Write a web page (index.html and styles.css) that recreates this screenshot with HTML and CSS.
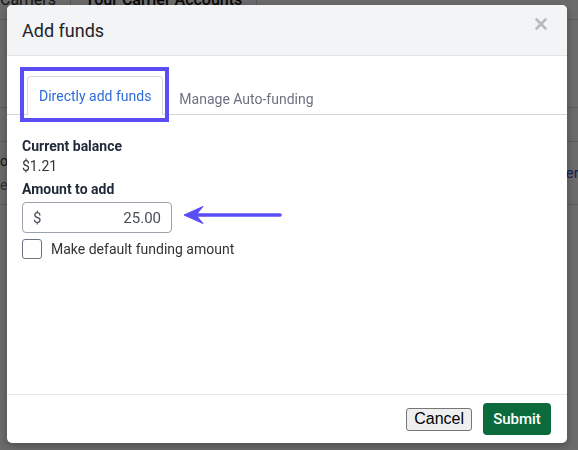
FILE: index.html
```html
<!DOCTYPE html>
<html lang="en">
<head>
    <meta charset="UTF-8">
    <meta name="viewport" content="width=device-width, initial-scale=1.0">
    <title>Add funds</title>
    <link rel="stylesheet" href="styles.css">
</head>
<body>
    <!-- Page behind the dialog -->
    <div class="page">
        <nav class="page-tabs">
            <span class="page-tab">Carriers</span>
            <span class="page-tab">Your Carrier Accounts</span>
        </nav>
        <div class="page-table">
            <div class="page-row"></div>
            <div class="page-row page-row-small"></div>
            <div class="page-row page-row-tall">
                <div class="page-cell">
                    <div>os</div>
                    <div class="page-sub">ev</div>
                </div>
                <a class="page-link">Serve</a>
            </div>
        </div>
    </div>
    <div class="backdrop"></div>

    <!-- Modal -->
    <div class="modal">
        <div class="modal-header">
            <h2 class="modal-title">Add funds</h2>
            <span class="close">
                <svg width="12" height="12" viewBox="0 0 12 12">
                    <path d="M1.5 1.5 L10.5 10.5 M10.5 1.5 L1.5 10.5" stroke="#b6bbc3" stroke-width="2.6" stroke-linecap="round"/>
                </svg>
            </span>
        </div>

        <div class="modal-body">
            <div class="tabs">
                <span class="tab tab-active">Directly add funds</span>
                <span class="tab tab-inactive">Manage Auto-funding</span>
            </div>

            <div class="content">
                <div class="field-label">Current balance</div>
                <div class="balance">$1.21</div>
                <label class="field-label amount-label" for="amount">Amount to add</label>
                <div class="money-input">
                    <span class="currency">$</span>
                    <input type="text" id="amount" class="amount" value="25.00">
                </div>
                <label class="check-row">
                    <span class="checkbox"></span>
                    Make default funding amount
                </label>
            </div>

            <!-- annotations -->
            <div class="highlight"></div>
            <svg class="pointer" width="106" height="22" viewBox="0 0 106 22">
                <path d="M15 11 L100 11" stroke="#5a4df6" stroke-width="3.6" stroke-linecap="round"/>
                <path d="M4 11 L23 2.5 L16 11 L23 19.5 Z" fill="#5a4df6" stroke="#5a4df6" stroke-width="1" stroke-linejoin="round"/>
            </svg>
        </div>

        <div class="modal-footer">
            <button class="btn-cancel">Cancel</button>
            <button class="btn-submit">Submit</button>
        </div>
    </div>
</body>
</html>
```

FILE: styles.css
```css
body {
    margin: 0;
    font-family: Roboto, "Noto Sans", Arial, sans-serif;
    background: #fff;
    height: 450px;
    overflow: hidden;
}

/* page behind the dialog */
.page {
    width: 600px;
}

.page-tabs {
    display: flex;
    margin-top: -9px;
    height: 28px;
    border-bottom: 1px solid #ddd;
    font-size: 16px;
    color: #333;
}

.page-tab {
    padding: 0 14px 0 0;
    border-right: 1px solid #ccc;
    line-height: 18px;
}

.page-tab + .page-tab {
    padding-left: 14px;
    font-weight: 500;
    color: #111;
}

.page-table {
    margin-top: 37px;
}

.page-row {
    height: 50px;
    border-bottom: 1px solid #d8d8d8;
}

.page-row-small {
    height: 33px;
}

.page-row-tall {
    height: 62px;
    display: flex;
    justify-content: space-between;
    align-items: center;
    font-size: 14px;
    color: #333;
}

.page-sub {
    color: #777;
    margin-top: 8px;
}

.page-link {
    color: #2a56c6;
    font-size: 15px;
    margin-right: 6px;
}

.backdrop {
    position: fixed;
    inset: 0;
    background: rgba(0, 0, 0, 0.58);
}

/* dialog */
.modal {
    position: fixed;
    left: 7px;
    top: 5px;
    width: 560px;
    height: 438px;
    background: #fff;
    border-radius: 5px;
    overflow: hidden;
    display: flex;
    flex-direction: column;
    box-shadow: 0 3px 10px rgba(0, 0, 0, 0.3);
}

.modal-header {
    height: 50px;
    flex-shrink: 0;
    background: #f3f4f6;
    border-bottom: 1px solid #dfe2e6;
    display: flex;
    align-items: center;
    justify-content: space-between;
    padding: 0 20px 0 15px;
}

.modal-title {
    margin: 0;
    font-size: 18px;
    font-weight: 400;
    color: #1f2328;
}

.close {
    display: flex;
    margin-top: -12px;
}

.modal-body {
    flex: 1;
    position: relative;
}

.tabs {
    display: flex;
    padding: 20px 0 0 20px;
    border-bottom: 1px solid #d2d6dc;
}

.tab {
    height: 39px;
    box-sizing: border-box;
    padding: 0 11px;
    display: flex;
    align-items: center;
    font-size: 14px;
    border: 1px solid transparent;
    border-bottom: none;
    border-radius: 4px 4px 0 0;
    margin-bottom: -1px;
}

.tab-active {
    background: #fff;
    border-color: #d6dade;
    color: #2f6bd8;
}

.tab-inactive {
    margin-left: 4px;
    padding-top: 6px;
    color: #6b7280;
}

.content {
    padding: 21px 15px 0;
}

.field-label {
    display: block;
    font-size: 14px;
    font-weight: 700;
    line-height: 20px;
    color: #1f2937;
}

.balance {
    font-size: 14px;
    line-height: 20px;
    color: #333;
}

.amount-label {
    margin-top: 3px;
}

.money-input {
    margin-top: 3px;
    width: 150px;
    height: 31px;
    box-sizing: border-box;
    border: 1px solid #9aa1ab;
    border-radius: 4px;
    display: flex;
    align-items: center;
    padding: 0 10px;
    font-size: 15px;
    color: #4a4f57;
}

.amount {
    flex: 1;
    min-width: 0;
    border: none;
    outline: none;
    padding: 0;
    text-align: right;
    font: inherit;
    color: inherit;
    background: transparent;
}

.check-row {
    margin-top: 6px;
    display: flex;
    align-items: center;
    gap: 9px;
    font-size: 14px;
    color: #333;
}

.checkbox {
    width: 20px;
    height: 20px;
    box-sizing: border-box;
    border: 1px solid #6b7280;
    border-radius: 3px;
}

/* annotation marks drawn over the dialog */
.highlight {
    position: absolute;
    left: 13px;
    top: 11px;
    width: 149px;
    height: 55px;
    box-sizing: border-box;
    border: 4px solid #5a4df6;
}

.pointer {
    position: absolute;
    left: 173px;
    top: 148px;
}

.modal-footer {
    height: 48px;
    flex-shrink: 0;
    border-top: 1px solid #e5e7eb;
    display: flex;
    align-items: center;
    justify-content: flex-end;
    gap: 11px;
    padding-right: 16px;
}

.btn-cancel {
    height: 23px;
    padding: 0 7px;
    font-family: "Liberation Sans", Arial, sans-serif;
    font-size: 16px;
    color: #000;
    background: #efefef;
    border: 1px solid #767676;
    border-radius: 3px;
}

.btn-submit {
    width: 68px;
    height: 32px;
    font-family: Roboto, Arial, sans-serif;
    font-size: 15px;
    font-weight: 500;
    color: #fff;
    background: #0b6b3c;
    border: none;
    border-radius: 4px;
}
```
